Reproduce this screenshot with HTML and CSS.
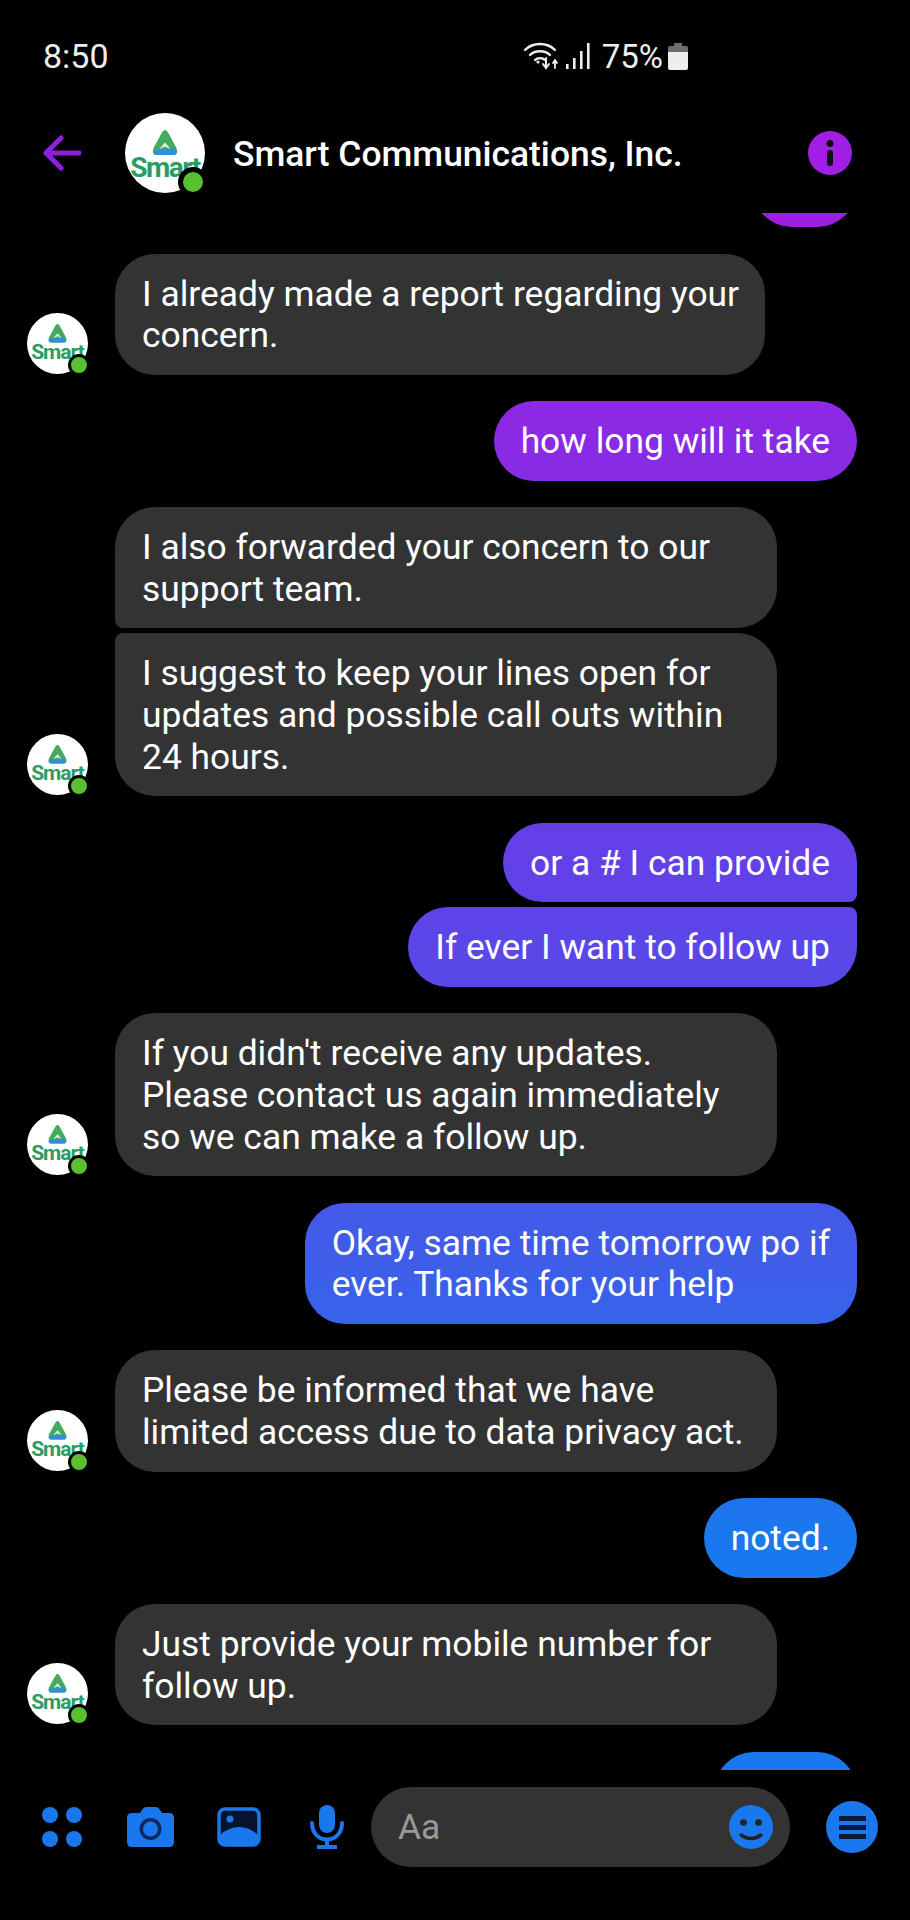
FILE: index.html
```html
<!DOCTYPE html>
<html lang="en">
<head>
<meta charset="UTF-8">
<meta name="viewport" content="width=device-width, initial-scale=1.0">
<title>Smart Communications, Inc.</title>
<link rel="stylesheet" href="styles.css">
</head>
<body>

<div class="status-bar">
  <span class="time">8:50</span>
  <div class="status-icons">
    <svg class="wifi" viewBox="0 0 36 30" fill="none" stroke="#eee" stroke-linecap="round">
      <path d="M2 9 C10 1 24 1 32 9" stroke-width="2.4"/>
      <path d="M7 14 C12 9 22 9 27 14" stroke-width="2.4"/>
      <path d="M12 19 C14.5 16.5 19.5 16.5 22 19" stroke-width="2.4"/>
      <circle cx="15" cy="21" r="1.6" fill="#eee" stroke="none"/>
      <path d="M23 17 V26 M20 23 L23 27 L26 23" stroke-width="2"/>
      <path d="M32 27 V20 M30 22 L32 19 L34 22" stroke-width="1.8"/>
    </svg>
    <svg class="signal" viewBox="0 0 24 26" fill="#eee">
      <rect x="0" y="21" width="2.6" height="5"/>
      <rect x="7" y="15" width="2.6" height="11"/>
      <rect x="14" y="8" width="2.6" height="18"/>
      <rect x="21" y="0" width="2.6" height="26"/>
    </svg>
    <span class="battery-text">75%</span>
    <svg class="battery" viewBox="0 0 20 27">
      <path d="M6 0 H14 V3 H18 Q20 3 20 5 V9 H0 V5 Q0 3 2 3 H6 Z" fill="#6e6e6e"/>
      <path d="M0 9 H20 V25 Q20 27 18 27 H2 Q0 27 0 25 Z" fill="#eee"/>
    </svg>
  </div>
</div>

<div class="chat-header">
  <svg class="back-arrow" viewBox="0 0 38 36" fill="none" stroke="#8f1fe0" stroke-width="5" stroke-linecap="round" stroke-linejoin="round">
    <path d="M36 18 H4 M18 3 L3 18 L18 33"/>
  </svg>
  <div class="avatar avatar-large">
    <svg class="logo-mark" viewBox="0 0 28 28">
      <path d="M14 0 Q16 0 17.500 3 L26 19 Q28 25 23 26 H5 Q0 25 2 19 L10.500 3 Q12 0 14 0 Z" fill="#45ab5c"/>
      <path d="M2 22 L9 19 L14 21 L20 17 L26 22 Q27 26 22 26 H6 Q1 26 2 22 Z" fill="#2f8fd8"/>
      <path d="M8 20 L14 13 L20 20 L14 17 Z" fill="#e8f5ee"/>
    </svg>
    <span class="logo-text">Smart</span>
    <span class="online-dot"></span>
  </div>
  <h1 class="chat-title">Smart Communications, Inc.</h1>
  <svg class="info-icon" viewBox="0 0 44 44">
    <circle cx="22" cy="22" r="22" fill="#a01fe2"/>
    <circle cx="22" cy="12.500" r="3.500" fill="#111"/>
    <rect x="19" y="19" width="6" height="16" rx="3" fill="#111"/>
  </svg>
</div>

<div class="messages">
  <div class="bubble mine cut-top"></div>

  <div class="row theirs">
    <div class="avatar avatar-small">
      <svg class="logo-mark" viewBox="0 0 28 28">
        <path d="M14 0 Q16 0 17.500 3 L26 19 Q28 25 23 26 H5 Q0 25 2 19 L10.500 3 Q12 0 14 0 Z" fill="#45ab5c"/>
        <path d="M2 22 L9 19 L14 21 L20 17 L26 22 Q27 26 22 26 H6 Q1 26 2 22 Z" fill="#2f8fd8"/>
        <path d="M8 20 L14 13 L20 20 L14 17 Z" fill="#e8f5ee"/>
      </svg>
      <span class="logo-text">Smart</span>
      <span class="online-dot"></span>
    </div>
    <div class="bubble their narrow">I already made a report regarding your<br>concern.</div>
  </div>

  <div class="row right">
    <div class="bubble mine">how long will it take</div>
  </div>

  <div class="row theirs">
    <div class="bubble their no-avatar group-first">I also forwarded your concern to our<br>support team.</div>
  </div>
  <div class="row theirs tight">
    <div class="avatar avatar-small">
      <svg class="logo-mark" viewBox="0 0 28 28">
        <path d="M14 0 Q16 0 17.500 3 L26 19 Q28 25 23 26 H5 Q0 25 2 19 L10.500 3 Q12 0 14 0 Z" fill="#45ab5c"/>
        <path d="M2 22 L9 19 L14 21 L20 17 L26 22 Q27 26 22 26 H6 Q1 26 2 22 Z" fill="#2f8fd8"/>
        <path d="M8 20 L14 13 L20 20 L14 17 Z" fill="#e8f5ee"/>
      </svg>
      <span class="logo-text">Smart</span>
      <span class="online-dot"></span>
    </div>
    <div class="bubble their group-last">I suggest to keep your lines open for<br>updates and possible call outs within<br>24 hours.</div>
  </div>

  <div class="row right">
    <div class="bubble mine group-first">or a # I can provide</div>
  </div>
  <div class="row right tight">
    <div class="bubble mine group-last">If ever I want to follow up</div>
  </div>

  <div class="row theirs">
    <div class="avatar avatar-small">
      <svg class="logo-mark" viewBox="0 0 28 28">
        <path d="M14 0 Q16 0 17.500 3 L26 19 Q28 25 23 26 H5 Q0 25 2 19 L10.500 3 Q12 0 14 0 Z" fill="#45ab5c"/>
        <path d="M2 22 L9 19 L14 21 L20 17 L26 22 Q27 26 22 26 H6 Q1 26 2 22 Z" fill="#2f8fd8"/>
        <path d="M8 20 L14 13 L20 20 L14 17 Z" fill="#e8f5ee"/>
      </svg>
      <span class="logo-text">Smart</span>
      <span class="online-dot"></span>
    </div>
    <div class="bubble their">If you didn't receive any updates.<br>Please contact us again immediately<br>so we can make a follow up.</div>
  </div>

  <div class="row right">
    <div class="bubble mine">Okay, same time tomorrow po if<br>ever. Thanks for your help</div>
  </div>

  <div class="row theirs">
    <div class="avatar avatar-small">
      <svg class="logo-mark" viewBox="0 0 28 28">
        <path d="M14 0 Q16 0 17.500 3 L26 19 Q28 25 23 26 H5 Q0 25 2 19 L10.500 3 Q12 0 14 0 Z" fill="#45ab5c"/>
        <path d="M2 22 L9 19 L14 21 L20 17 L26 22 Q27 26 22 26 H6 Q1 26 2 22 Z" fill="#2f8fd8"/>
        <path d="M8 20 L14 13 L20 20 L14 17 Z" fill="#e8f5ee"/>
      </svg>
      <span class="logo-text">Smart</span>
      <span class="online-dot"></span>
    </div>
    <div class="bubble their">Please be informed that we have<br>limited access due to data privacy act.</div>
  </div>

  <div class="row right">
    <div class="bubble mine">noted.</div>
  </div>

  <div class="row theirs">
    <div class="avatar avatar-small">
      <svg class="logo-mark" viewBox="0 0 28 28">
        <path d="M14 0 Q16 0 17.500 3 L26 19 Q28 25 23 26 H5 Q0 25 2 19 L10.500 3 Q12 0 14 0 Z" fill="#45ab5c"/>
        <path d="M2 22 L9 19 L14 21 L20 17 L26 22 Q27 26 22 26 H6 Q1 26 2 22 Z" fill="#2f8fd8"/>
        <path d="M8 20 L14 13 L20 20 L14 17 Z" fill="#e8f5ee"/>
      </svg>
      <span class="logo-text">Smart</span>
      <span class="online-dot"></span>
    </div>
    <div class="bubble their">Just provide your mobile number for<br>follow up.</div>
  </div>

  <div class="row right">
    <div class="bubble mine cut-bottom"></div>
  </div>
</div>

<div class="composer-bar">
  <svg class="icon-apps" viewBox="0 0 40 40" fill="#1a78ee">
    <circle cx="8" cy="8" r="8"/>
    <circle cx="32" cy="8" r="8"/>
    <circle cx="8" cy="32" r="8"/>
    <circle cx="32" cy="32" r="8"/>
  </svg>
  <svg class="icon-camera" viewBox="0 0 47 40">
    <path d="M5 6 H13 L16 1.500 Q17 0 19 0 H29 Q31 0 32 1.500 L35 6 H42 Q47 6 47 11 V35 Q47 40 42 40 H5 Q0 40 0 35 V11 Q0 6 5 6 Z" fill="#1a78ee"/>
    <circle cx="23.500" cy="22" r="11" fill="#0b2a5c"/>
    <circle cx="23.500" cy="22" r="7.500" fill="#1a78ee"/>
  </svg>
  <svg class="icon-photo" viewBox="0 0 44 40">
    <rect x="2" y="2" width="40" height="36" rx="6" fill="#04142e" stroke="#1a78ee" stroke-width="3.500"/>
    <circle cx="13" cy="12" r="3.500" fill="#1a78ee"/>
    <path d="M3 28 Q12 20 22 20 Q32 20 41 28 V33 Q41 38 36 38 H8 Q3 38 3 33 Z" fill="#1a78ee"/>
  </svg>
  <svg class="icon-mic" viewBox="0 0 34 44" fill="none">
    <rect x="9" y="0" width="16" height="28" rx="8" fill="#1a78ee"/>
    <path d="M2 18 C2 40 32 40 32 18" stroke="#1a78ee" stroke-width="4" stroke-linecap="round"/>
    <path d="M17 33 V41 M7 42 H27" stroke="#1a78ee" stroke-width="4"/>
  </svg>
  <div class="composer">
    <span class="composer-placeholder">Aa</span>
    <svg class="icon-emoji" viewBox="0 0 44 44" fill="none">
      <circle cx="22" cy="22" r="22" fill="#1a78ee"/>
      <circle cx="14.500" cy="17.500" r="3.300" fill="#222"/>
      <circle cx="29.500" cy="17.500" r="3.300" fill="#222"/>
      <path d="M12 30 Q22 37 32 30" stroke="#222" stroke-width="3.500" stroke-linecap="round"/>
    </svg>
  </div>
  <svg class="icon-menu" viewBox="0 0 52 52">
    <circle cx="26" cy="26" r="26" fill="#1a78ee"/>
    <rect x="13" y="15" width="27" height="5" fill="#0a1a38"/>
    <rect x="13" y="24" width="27" height="5" fill="#0a1a38"/>
    <rect x="13" y="33" width="27" height="5" fill="#0a1a38"/>
  </svg>
</div>

</body>
</html>
```

FILE: styles.css
```css
html, body {
  margin: 0;
  height: 100%;
}
body {
  display: flex;
  flex-direction: column;
  height: 1920px;
  overflow: hidden;
  background: #000;
  color: #fff;
  font-family: Roboto, "Liberation Sans", sans-serif;
}

/* status bar */
.status-bar {
  display: flex;
  justify-content: space-between;
  align-items: center;
  height: 40px;
  padding: 36px 222px 36px 43px;
  color: #eee;
  font-size: 34px;
}
.status-icons {
  display: flex;
  align-items: center;
}
.wifi {
  width: 36px;
  height: 30px;
}
.signal {
  width: 24px;
  height: 26px;
  margin-left: 7px;
}
.battery-text {
  margin-left: 12px;
  font-size: 33px;
}
.battery {
  width: 20px;
  height: 27px;
  margin-left: 5px;
}

/* header */
.chat-header {
  display: flex;
  align-items: center;
  height: 80px;
  padding: 1px 58px 20px 43px;
}
.back-arrow {
  width: 38px;
  height: 36px;
  flex: none;
}
.chat-title {
  flex: 1;
  margin: 2px 0 0 28px;
  font-size: 35.400px;
  font-weight: 500;
}
.info-icon {
  width: 44px;
  height: 44px;
  flex: none;
}

/* avatars */
.avatar {
  position: relative;
  display: flex;
  flex-direction: column;
  align-items: center;
  flex: none;
  box-sizing: border-box;
  border-radius: 50%;
  background: #fff;
}
.avatar-large {
  width: 80px;
  height: 80px;
  margin-left: 44px;
  padding-top: 17px;
}
.avatar-small {
  width: 61px;
  height: 61px;
  margin: 0 27px 1px 0;
  padding-top: 11px;
}
.logo-mark {
  width: 28px;
  height: 27px;
  flex: none;
}
.avatar-small .logo-mark {
  width: 21px;
  height: 20px;
}
.logo-text {
  color: #2a9d62;
  font-size: 28px;
  font-weight: 700;
  line-height: 22px;
  letter-spacing: -1.500px;
}
.avatar-small .logo-text {
  font-size: 21px;
  line-height: 17px;
  letter-spacing: -1px;
}
.online-dot {
  position: absolute;
  left: 53px;
  top: 54px;
  box-sizing: border-box;
  width: 30px;
  height: 30px;
  border: 5px solid #000;
  border-radius: 50%;
  background: #5ac02f;
}
.avatar-small .online-dot {
  left: 41px;
  top: 41px;
  width: 22px;
  height: 22px;
  border-width: 3px;
}

/* messages */
.messages {
  flex: 1;
  min-height: 0;
  overflow: hidden;
  padding: 0 53px 0 27px;
}
.row {
  display: flex;
  align-items: flex-end;
  margin-top: 26.500px;
}
.row.right {
  justify-content: flex-end;
}
.row.tight {
  margin-top: 5px;
}
.bubble {
  box-sizing: border-box;
  padding: 20px 27px 18px;
  border-radius: 40px;
  font-size: 35.400px;
  line-height: 41.600px;
  white-space: nowrap;
}
.their {
  width: 662px;
  background: #333;
}
.their.narrow {
  width: 650px;
}
.their.no-avatar {
  margin-left: 88px;
}
.their.group-first {
  border-bottom-left-radius: 8px;
}
.their.group-last {
  border-top-left-radius: 8px;
}
/* the gradient is fixed to the window, so each bubble takes its colour from where it sits */
.mine {
  background: linear-gradient(180deg, #a11de2 190px, #8a2ae4 440px, #6340e8 860px, #3f5de9 1260px, #1a78ee 1540px) fixed;
}
.mine.group-first {
  border-bottom-right-radius: 8px;
}
.mine.group-last {
  border-top-right-radius: 8px;
}
.cut-top {
  width: 105px;
  height: 80px;
  margin: -66px 0 0 auto;
}
.cut-bottom {
  width: 143px;
  height: 80px;
}

/* composer */
.composer-bar {
  display: flex;
  align-items: center;
  flex: none;
  height: 80px;
  padding: 17px 32px 53px 42px;
}
.icon-apps {
  width: 40px;
  height: 40px;
  flex: none;
}
.icon-camera {
  width: 47px;
  height: 40px;
  margin-left: 45px;
  flex: none;
}
.icon-photo {
  width: 44px;
  height: 40px;
  margin-left: 43px;
  flex: none;
}
.icon-mic {
  width: 34px;
  height: 44px;
  margin-left: 49px;
  flex: none;
}
.composer {
  display: flex;
  align-items: center;
  justify-content: space-between;
  box-sizing: border-box;
  width: 419px;
  height: 80px;
  margin-left: 27px;
  padding: 0 17px 0 27px;
  border-radius: 40px;
  background: #333;
}
.composer-placeholder {
  color: #999;
  font-size: 35.400px;
}
.icon-emoji {
  width: 44px;
  height: 44px;
}
.icon-menu {
  width: 52px;
  height: 52px;
  margin-left: 36px;
  flex: none;
}
```
